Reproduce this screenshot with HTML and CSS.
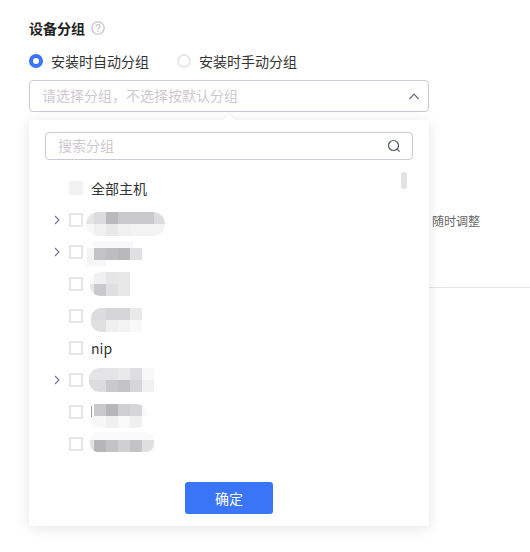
FILE: index.html
```html
<!DOCTYPE html>
<html lang="zh-CN">
<head>
<meta charset="utf-8">
<title>设备分组</title>
<link rel="stylesheet" href="styles.css">
</head>
<body>
<main class="form">
  <div class="title-row">
    <h2 class="title">设备分组</h2>
    <svg class="help" width="14" height="14" viewBox="0 0 14 14" fill="none" stroke="#c2c5cf" stroke-width="1.3"><circle cx="7" cy="7" r="6.2"/><path d="M5 5.6c0-1.1.9-1.9 2-1.9s2 .8 2 1.8c0 1.5-2 1.5-2 3.1"/><path d="M7 9.6v1.3"/></svg>
  </div>
  <div class="radios">
    <label class="radio"><span class="dot dot-on"></span>安装时自动分组</label>
    <label class="radio"><span class="dot"></span>安装时手动分组</label>
  </div>
  <div class="select-wrap">
    <div class="select">
      <span class="placeholder">请选择分组，不选择按默认分组</span>
      <svg width="10" height="7" viewBox="0 0 10 7" fill="none" stroke="#666c78" stroke-width="1.2"><path d="M.4 6 5 1.2 9.6 6"/></svg>
    </div>
    <div class="popup">
      <span class="caret"></span>
      <div class="search">
        <span class="placeholder">搜索分组</span>
        <svg width="14" height="14" viewBox="0 0 14 14" fill="none" stroke="#4f5866" stroke-width="1.2"><circle cx="6.5" cy="6.5" r="5"/><path d="m10.2 10.2 2.4 2.4"/></svg>
      </div>
      <div class="tree">
        <div class="row"><span class="arrow-slot"></span><span class="box box-off"></span><span class="label">全部主机</span></div>
        <div class="row"><svg class="arrow" width="6" height="10" viewBox="0 0 6 10" fill="none" stroke="#6d7383" stroke-width="1.1"><path d="m1 1 4 4-4 4"/></svg><span class="box"></span><span class="mosaic m1"></span></div>
        <div class="row"><svg class="arrow" width="6" height="10" viewBox="0 0 6 10" fill="none" stroke="#6d7383" stroke-width="1.1"><path d="m1 1 4 4-4 4"/></svg><span class="box"></span><span class="mosaic m2"></span></div>
        <div class="row"><span class="arrow-slot"></span><span class="box"></span><span class="mosaic m3"></span></div>
        <div class="row"><span class="arrow-slot"></span><span class="box"></span><span class="mosaic m4"></span></div>
        <div class="row"><span class="arrow-slot"></span><span class="box"></span><span class="label">nip</span></div>
        <div class="row"><svg class="arrow" width="6" height="10" viewBox="0 0 6 10" fill="none" stroke="#6d7383" stroke-width="1.1"><path d="m1 1 4 4-4 4"/></svg><span class="box"></span><span class="mosaic m5"></span></div>
        <div class="row"><span class="arrow-slot"></span><span class="box"></span><span class="mosaic m6"></span></div>
        <div class="row"><span class="arrow-slot"></span><span class="box"></span><span class="mosaic m7"></span></div>
      </div>
      <span class="thumb"></span>
      <div class="actions"><button class="confirm" type="button">确定</button></div>
    </div>
  </div>
  <p class="hint">随时调整</p>
  <hr class="divider">
</main>
</body>
</html>
```
FILE: styles.css
```css
* { box-sizing: border-box; }
html, body { margin: 0; height: 100%; background: #fff; overflow: hidden; }
body { font-family: "Noto Sans CJK SC", "Noto Sans", sans-serif; color: #333; font-size: 14px; }
.form { padding: 18px 0 0 29px; }
.title-row { display: flex; align-items: center; gap: 6px; height: 20px; }
.title { margin: 0; font-size: 14px; line-height: 20px; font-weight: 700; color: #222; }
.radios { display: flex; gap: 28px; margin-top: 13px; height: 20px; }
.radio { display: flex; align-items: center; gap: 8px; line-height: 20px; color: #333; }
.dot { width: 14px; height: 14px; border-radius: 50%; border: 2px solid #e8e8ea; background: #fff; }
.dot-on { border: 4px solid #3a75f8; }
.select-wrap { position: relative; margin-top: 9px; width: 400px; height: 32px; }
.select { display: flex; align-items: center; justify-content: space-between; height: 32px; padding: 0 9px 0 12px; border: 1px solid #c8cad6; border-radius: 4px; background: #fff; }
.placeholder { color: #cfc9cf; line-height: 20px; padding-bottom: 2px; }
.popup { position: absolute; z-index: 2; left: 0; top: 40px; width: 400px; height: 406px; padding: 12px 16px 0; background: #fff; border-radius: 3px; box-shadow: 0 2px 14px rgba(0, 0, 0, .11); }
.caret { position: absolute; left: 196px; top: -4px; width: 8px; height: 8px; background: #fff; transform: rotate(45deg); box-shadow: -1px -1px 2px rgba(0, 0, 0, .04); }
.search { position: relative; display: flex; align-items: center; justify-content: space-between; height: 28px; padding: 0 11px 0 12px; border: 1px solid #c8cad6; border-radius: 4px; background: #fff; }
.tree { margin-top: 12px; }
.row { display: flex; align-items: center; height: 32px; }
.arrow-slot { width: 6px; }
.arrow { display: block; flex: none; width: 6px; }
.row > :first-child { margin-left: 9px; }
.box { flex: none; width: 14px; height: 14px; margin-left: 9px; border: 2px solid #e6e6e8; border-radius: 2px; background: #fff; }
.box-off { background: #f2f2f3; border-color: #f2f2f3; }
.label { margin-left: 8px; color: #333; line-height: 20px; }
.thumb { position: absolute; left: 372px; top: 52px; width: 6px; height: 17px; border-radius: 3px; background: #e3e3e5; }
.actions { position: absolute; left: 0; right: 0; top: 362px; display: flex; justify-content: center; }
.confirm { width: 88px; height: 32px; padding: 0; border: 0; border-radius: 3px; background: #3a75f8; color: #fff; font: inherit; }
.mosaic { display: block; flex: none; height: 24px; }
.m1 { width: 79px; margin: 8px 0 0 3px; border-radius: 12px; background:
  linear-gradient(90deg, #e6e6e8 8px, #dcdcde 8px 20px, #b9b9bc 20px 32px, #c9c9cb 32px 68px, #dcdcde 68px) top / 100% 50% no-repeat,
  linear-gradient(90deg, #f7f7f7 8px, #f0f0f0 8px 20px, #e8e8e8 20px 32px, #f0f0f0 32px 44px, #f3f3f3 44px) bottom / 100% 50% no-repeat; }
.m2 { width: 55px; height: 25px; margin: 3px 0 0 4px; background:
  linear-gradient(90deg, #f3f3f3 7px, #c3c3c6 7px 19px, #bebec1 19px 31px, #b9b9bc 31px 43px, #e0e0e2 43px) 0 7px / 100% 12px no-repeat,
  linear-gradient(#f9f9f9, #f9f9f9) 6px 0 / 40px 7px no-repeat,
  linear-gradient(#f6f6f6, #f6f6f6) 0 19px / 19px 6px no-repeat; }
.m3 { width: 40px; margin-left: 7px; border-radius: 10px 0 0 10px; background:
  linear-gradient(90deg, #f9f9f9 4px, #f0f0f0 4px 16px, #e6e6e8 16px 28px, #e8e8e8 28px) top / 100% 50% no-repeat,
  linear-gradient(90deg, #e6e6e6 4px, #c9c9cc 4px 16px, #e0e0e2 16px 28px, #e8e8e8 28px) bottom / 100% 50% no-repeat; }
.m4 { width: 51px; margin: 8px 0 0 8px; border-radius: 10px 0 0 10px; background:
  linear-gradient(90deg, #dcdcde 3px, #dcdcde 3px 15px, #d6d6d8 15px 39px, #eaeaea 39px) top / 100% 50% no-repeat,
  linear-gradient(90deg, #e0e0e2 15px, #efefef 15px 27px, #f3f3f3 27px 39px, #f9f9f9 39px) bottom / 100% 50% no-repeat; }
.m5 { width: 65px; margin-left: 6px; border-radius: 11px 0 0 11px; background:
  linear-gradient(90deg, #e4e4e6 17px, #e4e4e6 17px 29px, #e9e9ea 29px 41px, #dedee0 41px 53px, #f8f8f8 53px) top / 100% 50% no-repeat,
  linear-gradient(90deg, #dcdce0 17px, #c9c9cc 17px 29px, #c3c3c6 29px 41px, #d6d6d8 41px 53px, #f0f0f0 53px) bottom / 100% 50% no-repeat; }
.m6 { width: 56px; margin: 8px 0 0 8px; border-radius: 0 10px 10px 10px; background:
  linear-gradient(#9a9a9a, #9a9a9a) 0 2px / 1px 11px no-repeat,
  linear-gradient(90deg, #fff 3px, #c9c9cb 3px 15px, #b6b6b8 15px 27px, #cfcfd1 27px 39px, #d6d6d8 39px 51px, #f8f8f8 51px) top / 100% 50% no-repeat,
  linear-gradient(90deg, #f7f7f7 15px, #f0f0f0 15px 27px, #f9f9f9 27px 39px, #f0f0f0 39px 51px, #fff 51px) bottom / 100% 50% no-repeat; }
.m7 { width: 64px; height: 20px; margin: 0 0 4px 7px; border-radius: 8px; background:
  linear-gradient(#fafafa, #fafafa) top / 100% 8px no-repeat,
  linear-gradient(90deg, #e3e3e3 4px, #b6b6b8 4px 16px, #c3c3c5 16px 28px, #cfcfd1 28px 40px, #c3c3c5 40px 52px, #dfdfe0 52px) bottom / 100% 12px no-repeat; }
.hint { margin: 100px 0 0 403px; font-size: 12px; line-height: 18px; color: #666; }
.divider { height: 1px; margin: 57px 0 0 400px; border: 0; background: #e6e6e8; }
```
